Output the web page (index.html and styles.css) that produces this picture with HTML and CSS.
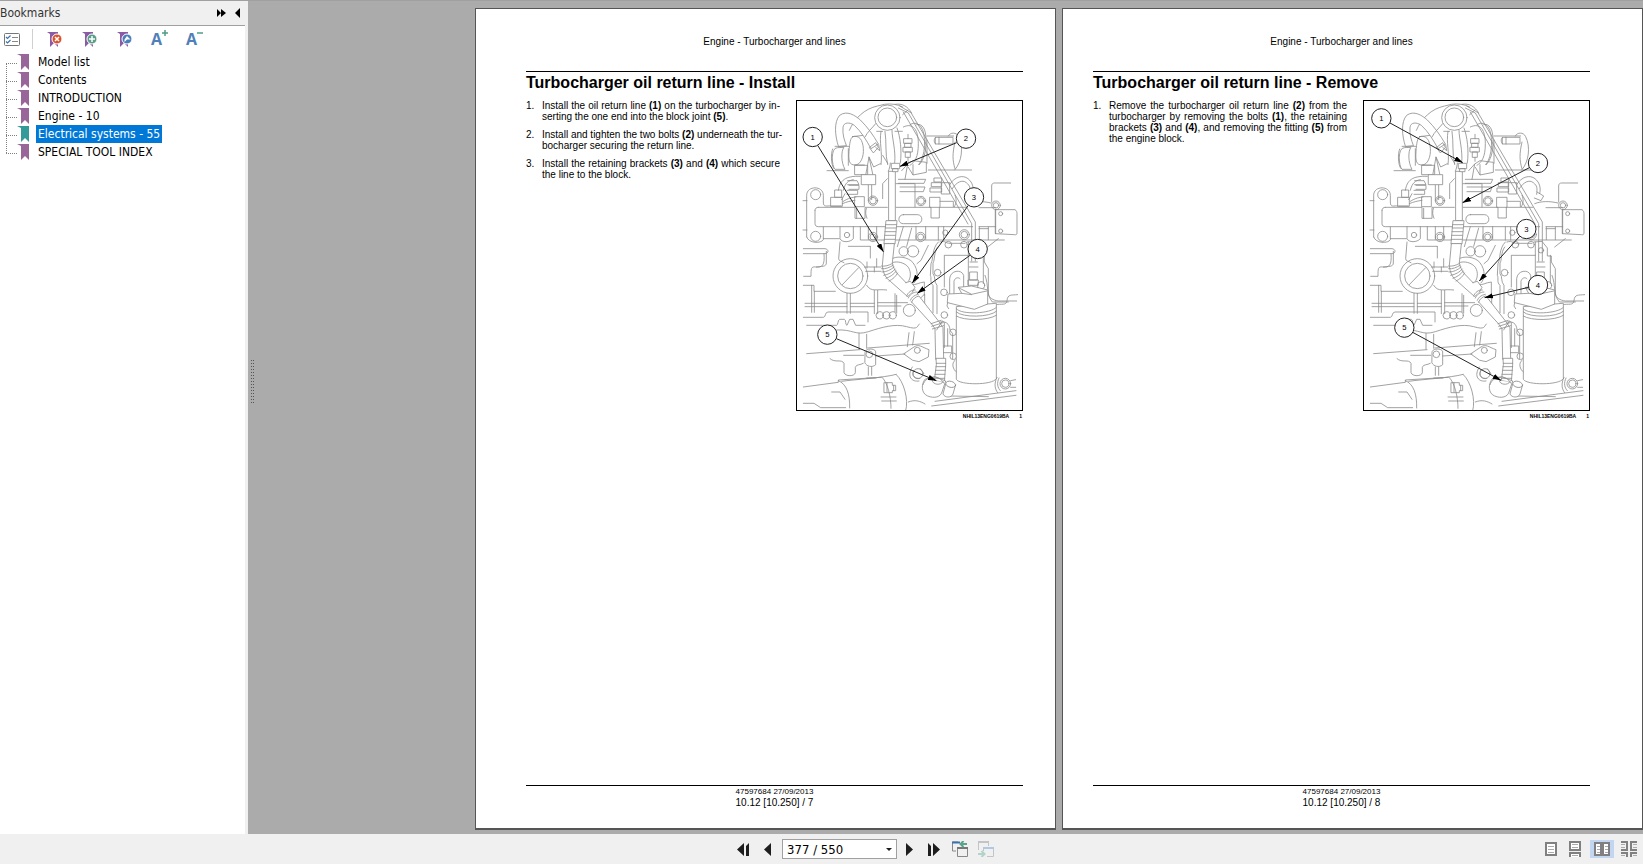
FILE: index.html
```
<!DOCTYPE html>
<html lang="en">
<head>
    <meta charset="UTF-8">
    <meta name="viewport" content="width=device-width, initial-scale=1.0">
    <title>Bookmarks</title>
    <link rel="stylesheet" href="styles.css">
</head>
<body>
    <div class="main">
        <aside class="sidebar">
            <div class="side-head">
                <h2>Bookmarks</h2>
                <button aria-label="Expand"><svg width="9" height="8" viewBox="0 0 9 8"><path d="M0 0l4 4-4 4zM4 0l5 4-5 4z"/></svg></button>
                <button aria-label="Collapse"><svg width="5" height="10" viewBox="0 0 5 10"><path d="M5 0v10L0 5z"/></svg></button>
            </div>
            <div class="side-tools">
                <button aria-label="Options">
                    <svg width="16" height="13" viewBox="0 0 16 13" fill="none">
                        <rect x=".5" y=".5" width="15" height="12" rx="1" stroke="#777" fill="#fff"/>
                        <path d="M8 4.500h6M8 8.500h6" stroke="#888"/>
                        <path d="M2 4l1.500 1.500L6.500 2.500M2 8.500L3.500 10l3-3" stroke="#3c72b0" stroke-width="1.200"/>
                    </svg>
                </button>
                <span class="sep"></span>
                <button aria-label="Delete bookmark">
                    <svg width="16" height="17" viewBox="0 0 16 17">
                        <path d="M0 1h11v15l-4-4-4 4V3z" fill="#8a5aa5"/>
                        <circle cx="10" cy="8" r="5" fill="#d9532c" stroke="#fff"/>
                        <path d="M8 6l4 4M12 6l-4 4" stroke="#fff" stroke-width="1.500"/>
                    </svg>
                </button>
                <button aria-label="Add bookmark">
                    <svg width="16" height="17" viewBox="0 0 16 17">
                        <path d="M0 1h11v15l-4-4-4 4V3z" fill="#8a5aa5"/>
                        <circle cx="10" cy="8" r="5" fill="#5a9e88" stroke="#fff"/>
                        <path d="M7 8h6M10 5v6" stroke="#fff" stroke-width="1.500"/>
                    </svg>
                </button>
                <button aria-label="Edit bookmark">
                    <svg width="16" height="17" viewBox="0 0 16 17">
                        <path d="M0 1h11v15l-4-4-4 4V3z" fill="#8a5aa5"/>
                        <circle cx="10" cy="8" r="5" fill="#4a80ba" stroke="#fff"/>
                        <path d="M7.500 11V8.500L10 5l3.500 3.500H10z" fill="#fff"/>
                    </svg>
                </button>
                <button class="letter" aria-label="Larger text">
                    A<svg width="6" height="6" viewBox="0 0 6 6"><path d="M0 3h6M3 0v6" stroke="#4f9c85" stroke-width="1.500"/></svg>
                </button>
                <button class="letter" aria-label="Smaller text">
                    A<svg width="6" height="6" viewBox="0 0 6 6"><path d="M0 3h6" stroke="#4f9c85" stroke-width="1.500"/></svg>
                </button>
            </div>
            <ul class="tree">
                <li><svg class="mark" viewBox="0 0 12 16"><path d="M0 0h12v16l-4-4-4 4V2z"/></svg><a href="#">Model list</a></li>
                <li><svg class="mark" viewBox="0 0 12 16"><path d="M0 0h12v16l-4-4-4 4V2z"/></svg><a href="#">Contents</a></li>
                <li><svg class="mark" viewBox="0 0 12 16"><path d="M0 0h12v16l-4-4-4 4V2z"/></svg><a href="#">INTRODUCTION</a></li>
                <li><svg class="mark" viewBox="0 0 12 16"><path d="M0 0h12v16l-4-4-4 4V2z"/></svg><a href="#">Engine - 10</a></li>
                <li class="selected"><svg class="mark" viewBox="0 0 12 16"><path d="M0 0h12v16l-4-4-4 4V2z"/></svg><a href="#">Electrical systems - 55</a></li>
                <li><svg class="mark" viewBox="0 0 12 16"><path d="M0 0h12v16l-4-4-4 4V2z"/></svg><a href="#">SPECIAL TOOL INDEX</a></li>
            </ul>
        </aside>
        <div class="grip"><span></span></div>

        <main class="viewer">
            <article class="page left">
                <header>Engine - Turbocharger and lines</header>
                <h1>Turbocharger oil return line - Install</h1>
                <div class="cols">
                    <ol>
                        <li>Install the oil return line <b>(1)</b> on the turbocharger by in&shy;serting the one end into the block joint <b>(5)</b>.</li>
                        <li><span class="line">Install and tighten the two bolts <b>(2)</b> underneath the tur-</span> bocharger securing the return line.</li>
                        <li>Install the retaining brackets <b>(3)</b> and <b>(4)</b> which secure the line to the block.</li>
                    </ol>
                    <figure>
                        <svg class="drawing" viewBox="26 17 675 926">
                            <defs>
                                <marker id="tip" viewBox="0 0 26 16" refX="25" refY="8" markerWidth="26" markerHeight="16" markerUnits="userSpaceOnUse" orient="auto"><path d="M0 0l26 8-26 8z" fill="#000" stroke="none"/></marker>
                                <g id="engine" fill="none" stroke="#8a8a8a" stroke-width="2.400" stroke-linejoin="round" stroke-linecap="round">
                                    <!-- turbocharger housing -->
                                    <path d="M183 105c15-35 45-65 85-73l20-5c20-3 40 0 55 8"/>
                                    <path d="M140 153h42M146 157c-20 0-16 55-6 65h30c-12-20-12-55-4-65zM133 161c-6 14-5 46 3 58M116 226h64M180 210v-50"/>
                                    <path d="M193 124c20-6 30 10 32 35s-8 50-25 50-20-12-18-40 4-40 11-45zM193 124l40-5M200 209h28"/>
                                    <path d="M150 152c-10-30-14-72 4-92 22-16 46 0 62 14 22 22 38 44 54 72l-22 14c-14-26-30-52-50-70-14-10-32-10-34 6-2 22 4 38 10 54z" fill="#fff"/>
                                    <path d="M244 156l18-14 8 14-14 16zM262 156l12 10-3-18"/>
                                    <circle cx="297" cy="67" r="38" fill="#fff"/><circle cx="297" cy="66" r="28"/>
                                    <path d="M262 85c-12 15-25 25-32 40M278 108c-6 35 5 60 0 100M290 108c5 30 0 70 8 100M311 105c0 25 12 60 8 98M326 98c10 25 15 70 10 105M265 108h18M320 108h22"/>
                                    <path d="M347 130h24v14h-24zM350 144h18v12h-18zM345 156h27v14h-27zM352 170h14v16h-14zM359 117v13M359 186v12"/>
                                    <path d="M345 95c30-15 45 10 45 50s-10 55-25 65M365 88c8-5 20-8 32 5 18 20 15 95-6 115M385 88c18-5 28 15 28 45 0 45-8 60-20 75"/>
                                    <path d="M416 122h80M416 134v70M442 126h52v20h-52zM442 126c-6 4-6 16 0 20M452 126v20M480 122c5-12 25-12 31 2 15 30 10 76-12 100M500 140c-8 35-8 55 0 80M420 224h130"/>
                                    <!-- brackets below the turbo -->
                                    <path d="M232 240l10-55 12 55M242 185l14 30 20-10M200 210h38v28h-38zM240 268v48M250 268v45M283 180l15 24M322 265h58v70M283 310v-45l14-15M330 252h82l-5 12h-77M335 275h75l-5 14h-70M350 252l8-46 16-10 40 5v30l-40 8-14-23M358 206l-18 20M374 238v-30"/>
                                    <path d="M220 238h42v30h-42z" fill="#fff"/>
                                    <path d="M150 285c5-30 20-44 66-42M165 285c5-22 15-30 30-32M178 256h28l6 12h-34M182 270h30v12h-30M176 285h32v12h-32M170 295l-10 18"/>
                                    <path d="M140 284h20v22h-20zM128 306h34v27h-34zM200 304h28v30h-28zM165 318c15-10 28-12 38-13M162 325c14-6 25-8 38-10"/>
                                    <circle cx="254" cy="316" r="14"/><circle cx="254" cy="316" r="10"/><circle cx="398" cy="317" r="14"/><circle cx="398" cy="317" r="10"/>
                                    <path d="M438 248h22v12h-22zM430 262h30v12h-30zM426 278h34v12h-34zM460 262h24v34h-24zM484 268c15-25 40-30 55-18s18 30 14 45M492 280c12-20 30-28 42-18s12 15 10 35M545 290l20 12-8 14-20-8M425 306h30v30h-30zM455 318h40v16M500 300c5 12 5 22-2 34"/>
                                    <!-- manifold rail -->
                                    <path d="M55 425V300c0-30 50-30 50 0v20c0 18 10 10 24 12h30M105 395v38c-6 12-44 12-50-8M44 316h12M44 404h12"/>
                                    <circle cx="82" cy="298" r="15"/><circle cx="82" cy="423" r="15"/>
                                    <path d="M90 336h110v33h30v-33h67M323 336h105v32h25v-32h80M80 345c0-6 4-9 10-9M80 345v40c0 6 4 9 10 9h205M323 394h230M205 369v-30M236 369c-5-10-5-20-2-30"/>
                                    <path d="M345 358h42c18 0 18 27 0 27h-42c-18 0-18-27 0-27z" fill="#fff"/>
                                    <path d="M105 430h48M155 394v36c5 12 30 12 40 0v-36M216 394v40h80M240 394v38M265 394v38M323 434h325M345 394l-18 60M370 398l-15 55M383 394v38M412 394v38M450 394v40M466 394v40M600 395v38"/>
                                    <circle cx="176" cy="419" r="8"/><circle cx="254" cy="425" r="14"/><circle cx="254" cy="425" r="9"/><circle cx="397" cy="425" r="14"/><circle cx="397" cy="425" r="9"/><circle cx="471" cy="412" r="8"/><circle cx="528" cy="418" r="15"/><circle cx="528" cy="418" r="10"/>
                                    <path d="M610 320v-48c0-6 3-9 9-9h48M538 325c20-8 45-8 70-2M572 337h50M572 394h50M622 343h58c5 3 6 8 6 12v58c0 5-3 6-8 5l-56-3zM622 343v72M573 395v38M600 400h-28"/>
                                    <circle cx="623" cy="330" r="13"/><circle cx="623" cy="330" r="8"/><circle cx="637" cy="355" r="6"/><circle cx="637" cy="407" r="6"/>
                                    <!-- left side of the block -->
                                    <path d="M45 460h65c12 2 12 14 0 15H45M107 475c3 35-5 42-25 40-14-2-14 5-14 28H46M114 468v35c0 12-15 10-30 12M155 440l-4 50c0 8 10 8 16 12M180 453h65M246 453v35"/>
                                    <circle cx="186" cy="542" r="52"/><circle cx="186" cy="542" r="38"/><path d="M162 568l49-51"/>
                                    <path d="M228 515h50M236 500v18M235 570c14 22 30 10 60 14M265 490v25M258 530v-15M232 528h46M45 570h32v18h64M176 594v60M186 594v60M258 585v70M268 585v70M70 570v81M78 588v63M320 595v55M325 600v53M50 624h126M186 624h72M268 622h90M50 634h126M186 634h72M268 632h70M382 628h26M395 610l14-14v60"/>
                                    <circle cx="346" cy="468" r="14"/><circle cx="374" cy="468" r="17"/>
                                    <path d="M308 492c15-12 52-8 66 10 18 24 14 50 3 61M312 502c14-6 38 0 48 14 10 16 6 34 0 42M370 568c12 2 20-6 38-8v40"/>
                                    <path d="M45 666h60c8 0 4-16 14-16h120v30M55 690h90c4 0 4-18 9-18h14c6 0 2 18 8 18l8-18h10l8 18h28"/>
                                    <circle cx="274" cy="660" r="11"/><circle cx="294" cy="660" r="11"/><circle cx="313" cy="660" r="11"/><circle cx="363" cy="645" r="18"/>
                                    <path d="M145 704c50-3 55 18 95 5s80-25 115-15 30 0 38-8M212 714v48M235 717v42M362 712l-5 42M378 709l-5 40M55 775l160-12M238 758l185-14M166 780h60M262 782l88-6"/>
                                    <path d="M125 790c15 14 35 0 42 14v28c4 12 32 12 34 0v-16c3-10 14-6 24-12M230 770c0-12 32-12 32 0v38c-10 10-28 5-32-5zM240 815v25M250 815v25M235 848h28"/>
                                    <circle cx="243" cy="777" r="10"/>
                                    <path d="M347 775l30-20c15-10 22 0 45 8l-2 22-28 14-18-4z"/><circle cx="387" cy="765" r="9"/>
                                    <path d="M372 815c-18 28-2 46 20 42M376 825c-8 18 4 26 18 24M396 820l10 14"/><circle cx="389" cy="835" r="15"/>
                                    <!-- starter motor -->
                                    <path d="M45 875l105-14v-7l128-8M160 858c40-6 124-10 164-21M150 856c25 10 35 40 34 82M280 845c18 15 28 60 28 94M324 838c22 20 38 75 28 108M130 890h25l15 22M45 924h32l20 13h75M288 862h24v8h10v16h-10v6h-24zM296 862v28M316 870v16M278 905h45M280 917h44"/>
                                    <!-- timing cover -->
                                    <path d="M450 440c-20 20-14 50-22 65l-2 35c5 10-3 20 8 30v82M455 440c18-5 15 4 30 4h45M448 455c-12 16-8 40-14 48v32c8 8 2 24 12 35v85M420 450l-22 45-12 10M470 480h70M468 480v95M455 680c25-5 30 15 30 25l8 10v75M462 676l6 6v75M478 700v52"/>
                                    <circle cx="480" cy="448" r="10"/><circle cx="527" cy="448" r="10"/><circle cx="448" cy="532" r="10"/><circle cx="467" cy="591" r="10"/><circle cx="468" cy="659" r="10"/><circle cx="494" cy="711" r="10"/><circle cx="495" cy="783" r="10"/>
                                    <path d="M540 440v130M585 480v85M536 440l24-2 16 20v24h12v18l12 20v75c0 12 15 20 30 22h55M630 430l-32 25M545 500h22M543 515h26M545 530h22v24h-22zM540 554h30v16h-30zM590 540c12 30 2 55 22 80h48M688 598c-20 2-30-2-32 18-2 16-18 8-32 12"/>
                                    <circle cx="557" cy="465" r="8"/><circle cx="578" cy="570" r="11"/>
                                    <!-- oil filter -->
                                    <path d="M504 635v217c10 18 108 18 120-2V625z" fill="#fff"/>
                                    <path d="M484 600v-50c2-25 35-30 42-10v35M497 596v-38c2-10 12-14 18-8"/>
                                    <path d="M480 596l40-2-10-18 40-4 48 12v42l-40 16-80-20z" fill="#fff"/>
                                    <path d="M510 577l40 20 45-10M520 594l30 4M478 622l-2 10 5 8M504 640c15 20 105 15 120-4M504 650c20 18 100 16 120-2M504 662c22 15 96 14 120-2"/>
                                    <circle cx="651" cy="865" r="16"/><circle cx="651" cy="865" r="11"/>
                                    <path d="M632 848c-8 16-4 30 4 38M626 846c-10 20-6 36 2 46M667 856l15-3M667 876h15M500 795c-12 8-6 28 4 35M360 920c20-8 35-3 50 6M440 918l243-32M430 932l253-32M480 902l120 2"/>
                                    <!-- long tube from the turbo -->
                                    <path d="M330 38l30 15 190 332v112M345 50l194 336M334 32l34 20 193 328v117M320 27c22-4 38 6 50 26M343 58l16-14"/>
                                    <!-- oil return line -->
                                    <path d="M302 228h19v148h-19z" fill="#fff"/>
                                    <path d="M310 204h24v16h-24zM314 220h15v9h-15zM300 228c3-8 6-18 6-25" fill="#fff"/>
                                    <path d="M294 376h32l-6 70h-32zM292 388h32M291 398h32M290 409h32M289 420h32M288 432h32" fill="#fff"/>
                                    <path d="M288 446l-6 64c2 24 10 38 24 48l52 46 18-18-48-50c-8-10-14-20-16-34l6-56z" fill="#fff"/>
                                    <path d="M280 512c10 2 22-2 31-7M280 520c12 2 24-4 34-10M281 530c14 0 26-6 36-15M286 540c14-2 28-10 35-19M293 549c12-4 24-12 31-22M302 557c12-5 20-14 26-24"/>
                                    <path d="M352 562l14-4 14 18-8 14M355 602c3-10 15-20 26-18M360 608c4-10 14-18 26-18M366 615c4-10 12-16 24-18" fill="#fff"/>
                                    <path d="M370 620l60 66 10 14 2 92h24l-2-95-12-18-60-77c-10 2-18 8-22 18z" fill="#fff"/>
                                    <path d="M428 685l30-10M430 693l34-11M432 701l34-10M445 704l16-25"/>
                                    <path d="M444 789h28v20l-4 52-30-5 6-48zM444 804h28M443 814h29M442 825h29M440 837h30M438 849h31" fill="#fff"/>
                                    <path d="M466 752h24v20h-24"/>
                                    <path d="M410 852c-12 14-12 42 8 50s40 4 44-15l10-30-30-12zM404 868c10-30 50-30 62-5M432 856c0 12 26 16 32 3" fill="#fff"/>
                                    <path d="M472 866l-8 30c5 12 26 12 30 0l8-28" fill="#fff"/>
                                    <ellipse cx="487" cy="867" rx="15" ry="9" transform="rotate(15 487 867)" fill="#fff"/>
                                </g>
                            </defs>
                            <use href="#engine"/>
                            <g class="callouts">
                                <path d="M88 150L285 469"/><path d="M505 142L335 213"/><path d="M540 330L372 563"/><path d="M545 480L387 594"/><path d="M144 730L444 856"/>
                                <circle cx="73" cy="125" r="29"/><circle cx="533" cy="130" r="29"/><circle cx="557" cy="306" r="29"/><circle cx="568" cy="461" r="29"/><circle cx="117" cy="718" r="29"/>
                                <text x="73" y="133">1</text><text x="533" y="138">2</text><text x="557" y="314">3</text><text x="568" y="469">4</text><text x="117" y="726">5</text>
                            </g>
                        </svg>
                        <figcaption><span>NHIL13ENG0619BA</span><span>1</span></figcaption>
                    </figure>
                </div>
                <footer>
                    <div><small>47597684 27/09/2013</small>10.12 [10.250] / 7</div>
                </footer>
            </article>

            <article class="page right">
                <header>Engine - Turbocharger and lines</header>
                <h1>Turbocharger oil return line - Remove</h1>
                <div class="cols">
                    <ol>
                        <li>Remove the turbocharger oil return line <b>(2)</b> from the turbocharger by removing the bolts <b>(1)</b>, the retaining brackets <b>(3)</b> and <b>(4)</b>, and removing the fitting <b>(5)</b> from the engine block.</li>
                    </ol>
                    <figure>
                        <svg class="drawing" viewBox="26 17 675 926">
                            <use href="#engine"/>
                            <g class="callouts">
                                <path d="M104 83L322 202"/><path d="M522 217L322 322"/><path d="M493 423L372 557"/><path d="M520 576L388 607"/><path d="M172 711L437 855"/>
                                <circle cx="78" cy="69" r="29"/><circle cx="548" cy="203" r="29"/><circle cx="513" cy="401" r="29"/><circle cx="548" cy="569" r="29"/><circle cx="147" cy="697" r="29"/>
                                <text x="78" y="77">1</text><text x="548" y="211">2</text><text x="513" y="409">3</text><text x="548" y="577">4</text><text x="147" y="705">5</text>
                            </g>
                        </svg>
                        <figcaption><span>NHIL13ENG0619BA</span><span>1</span></figcaption>
                    </figure>
                </div>
                <footer>
                    <div><small>47597684 27/09/2013</small>10.12 [10.250] / 8</div>
                </footer>
            </article>
        </main>
    </div>

    <div class="statusbar">
        <nav class="pager">
            <button aria-label="First page"><svg width="12" height="13" viewBox="0 0 12 13"><path d="M7 0v13L0 6.500zM12 0v13H9V3z"/></svg></button>
            <button aria-label="Previous page"><svg width="7" height="13" viewBox="0 0 7 13"><path d="M7 0v13L0 6.500z"/></svg></button>
            <div class="combo">
                <select aria-label="Page"><option>377 / 550</option></select>
                <svg width="6" height="3" viewBox="0 0 6 3"><path d="M0 0h6L3 3z"/></svg>
            </div>
            <button aria-label="Next page"><svg width="7" height="13" viewBox="0 0 7 13"><path d="M0 0v13l7-6.500z"/></svg></button>
            <button aria-label="Last page"><svg width="12" height="13" viewBox="0 0 12 13"><path d="M5 0v13l7-6.500zM0 0v13h3V3z"/></svg></button>
            <button class="view" aria-label="Previous view">
                <svg width="16" height="16" viewBox="0 0 16 16" fill="none">
                    <path d="M6 1H.500v9H4M5.500 15.500v-9h10v9z" stroke="#888"/>
                    <path d="M0 1.500h8" stroke="#3c72b0" stroke-width="2"/>
                    <path d="M5 7h11" stroke="#777" stroke-width="2"/>
                    <path d="M15 3H9M11.500 0L8.500 3l3 3" stroke="#5aa38c" stroke-width="2"/>
                </svg>
            </button>
            <button class="view" aria-label="Next view" disabled>
                <svg width="16" height="16" viewBox="0 0 16 16" fill="none">
                    <path d="M.500 9V.500h10V5M5.500 10V6.500h10v9H9" stroke="#c4c4c4"/>
                    <path d="M0 1h11" stroke="#c4c4c4" stroke-width="2"/>
                    <path d="M5 7h11" stroke="#afc8e4" stroke-width="2"/>
                    <path d="M0 13h6M3.500 10l3 3-3 3" stroke="#b2d3c8" stroke-width="2"/>
                </svg>
            </button>
        </nav>
        <div class="layouts">
            <button aria-label="Single page"><svg width="12" height="14" viewBox="0 0 12 14"><path d="M1 1h10v12H1z" fill="#fff"/><path class="ln" d="M3 4.500h6M3 7.500h6M3 10.500h6"/></svg></button>
            <button aria-label="Continuous"><svg width="12" height="16" viewBox="0 0 12 16"><path d="M1 0v9h10V0M1 16v-4h10v4M1 1h10" fill="#fff"/><path class="ln" d="M3 3.500h6M3 6.500h6M3 14.500h6"/></svg></button>
            <button class="on" aria-label="Two pages"><svg width="16" height="14" viewBox="0 0 16 14"><path d="M1 1h6v12H1zM9 1h6v12H9z" fill="#fff"/><path class="ln" d="M3 4.500h3M3 7.500h3M3 10.500h3M11 4.500h3M11 7.500h3M11 10.500h3"/></svg></button>
            <button aria-label="Two pages continuous"><svg width="16" height="16" viewBox="0 0 16 16"><path d="M0 1h6v8H0M16 1h-6v8h6M0 12h6v4M16 12h-6v4" fill="none"/><path class="ln" d="M0 3.500h4M0 6.500h4M12 3.500h4M12 6.500h4M0 14.500h4M12 14.500h4"/></svg></button>
        </div>
    </div>
</body>
</html>
```
FILE: styles.css
```
*{
    margin: 0;
    padding: 0;
    box-sizing: border-box;
}
body{
    display: flex;
    flex-direction: column;
    height: 100vh;
    overflow: hidden;
    font-family: "DejaVu Sans Condensed", "DejaVu Sans", sans-serif;
    font-stretch: condensed;
    font-size: 12px;
    color: #000;
    background-color: #f0f0f0;
}
button{
    border: none;
    background: none;
    display: flex;
    align-items: center;
    justify-content: center;
    cursor: pointer;
}
svg{
    display: block;
    flex-shrink: 0;
}
.main{
    flex: 1;
    min-height: 0;
    display: flex;
    background-color: #ababab;
    border-top: 1px solid #a0a0a0;
}

/* bookmarks panel */
.sidebar{
    width: 248px;
    flex-shrink: 0;
    background-color: #fff;
    border-right: 3px solid #f0f0f0;
}
.side-head{
    height: 25px;
    display: flex;
    align-items: center;
    gap: 9px;
    padding-right: 5px;
    background-color: #f0f0f0;
    border-bottom: 1px solid #a0a0a0;
}
.side-head h2{
    flex: 1;
    font-size: 12px;
    font-weight: normal;
    color: #333;
}
.side-tools{
    height: 26px;
    display: flex;
    align-items: center;
    gap: 19px;
    padding-left: 4px;
}
.sep{
    width: 1px;
    height: 20px;
    margin: 0 -5px 0 -7px;
    background-color: #d0d0d0;
}
.letter{
    align-items: flex-start;
    margin-left: -1px;
    font-family: "Open Sans", sans-serif;
    font-size: 16px;
    font-weight: bold;
    line-height: 18px;
    color: #5080b8;
}
.tree{
    list-style: none;
    padding: 1px 0 0 6px;
}
.tree li{
    position: relative;
    height: 18px;
    display: flex;
    align-items: center;
    padding-left: 11px;
}
/* dotted connectors */
.tree li::before{
    content: "";
    position: absolute;
    left: 0;
    top: 10px;
    width: 11px;
    border-top: 1px dotted #808080;
}
.tree li::after{
    content: "";
    position: absolute;
    left: 0;
    top: 10px;
    height: 18px;
    border-left: 1px dotted #808080;
}
.tree li:last-child::after{
    display: none;
}
.mark{
    width: 12px;
    height: 16px;
    fill: #996699;
}
.tree a{
    margin-left: 7px;
    padding: 0 2px;
    line-height: 18px;
    color: #000;
    text-decoration: none;
    white-space: nowrap;
}
.selected a{
    background-color: #0078d7;
    color: #fff;
}
.selected .mark{
    fill: #339999;
}
.grip{
    width: 6px;
    display: flex;
    align-items: center;
    justify-content: flex-end;
}
.grip span{
    width: 3px;
    height: 44px;
    margin-bottom: 72px;
    background: linear-gradient(90deg, transparent 1px, #ababab 1px, #ababab 2px, transparent 2px), repeating-linear-gradient(#555 0 1px, #ababab 1px 3px);
}

/* document pages */
.viewer{
    flex: 1;
    display: flex;
    justify-content: flex-end;
    gap: 6px;
    padding: 7px 0 4px;
    font-family: "Liberation Sans", Arial, sans-serif;
    font-stretch: normal;
    font-size: 10px;
    line-height: 11px;
}
.page{
    width: 581px;
    display: flex;
    flex-direction: column;
    background-color: #fff;
    border: 1px solid #555;
    border-bottom-width: 2px;
}
.left{
    padding: 0 32px 0 50px;
}
.right{
    padding: 0 52px 0 30px;
}
.page header{
    height: 63px;
    padding-top: 27px;
    text-align: center;
    border-bottom: 1px solid #000;
}
.page h1{
    font-size: 16px;
    line-height: 18px;
    padding-top: 2px;
}
.cols{
    flex: 1;
    display: flex;
    justify-content: space-between;
    padding-top: 8px;
}
.cols ol{
    width: 254px;
    padding-left: 16px;
    list-style: none;
    counter-reset: step;
}
.cols li{
    position: relative;
    text-align: justify;
    margin-bottom: 7px;
    counter-increment: step;
}
.cols li::before{
    content: counter(step) ".";
    position: absolute;
    left: -16px;
}
.line{
    display: block;
    white-space: nowrap;
}
figure{
    width: 227px;
}
.drawing{
    width: 227px;
    border: 1px solid #000;
}
.callouts{
    font-size: 23px;
    text-anchor: middle;
}
.callouts circle{
    fill: #fff;
    stroke: #222;
    stroke-width: 3px;
}
.callouts path{
    stroke: #222;
    stroke-width: 3px;
    marker-end: url(#tip);
}
figcaption{
    display: flex;
    justify-content: flex-end;
    gap: 10px;
    padding-right: 1px;
    font-size: 5px;
    font-weight: bold;
}
.page footer{
    height: 43px;
    display: flex;
    justify-content: center;
    border-top: 1px solid #000;
}
.page small{
    display: block;
    font-size: 8px;
}

/* bottom bar */
.statusbar{
    height: 30px;
    display: flex;
    justify-content: space-between;
    align-items: center;
    padding-right: 5px;
}
.pager{
    display: flex;
    align-items: center;
    gap: 15px;
    margin-left: 45%;
}
.pager svg{
    fill: #1e1e1e;
}
.pager .view{
    margin: 0 -2px 0 -3px;
}
.pager .view svg{
    fill: none;
}
.combo{
    position: relative;
    margin: 0 -6px 0 -4px;
}
.combo select{
    width: 115px;
    height: 20px;
    padding-left: 4px;
    appearance: none;
    border: 1px solid #a0a0a0;
    background-color: #fff;
    color: #000;
    font-family: inherit;
    font-stretch: inherit;
    font-size: 13px;
}
.combo svg{
    position: absolute;
    right: 5px;
    top: 9px;
    pointer-events: none;
}
.layouts{
    display: flex;
    align-items: center;
    gap: 6px;
}
.layouts button{
    width: 18px;
    height: 18px;
}
.layouts .on{
    width: 24px;
    background-color: #c2d6f2;
}
.layouts path{
    stroke: #808080;
    stroke-width: 2px;
}
.layouts .ln{
    stroke: #aaa;
    stroke-width: 1px;
}
```
